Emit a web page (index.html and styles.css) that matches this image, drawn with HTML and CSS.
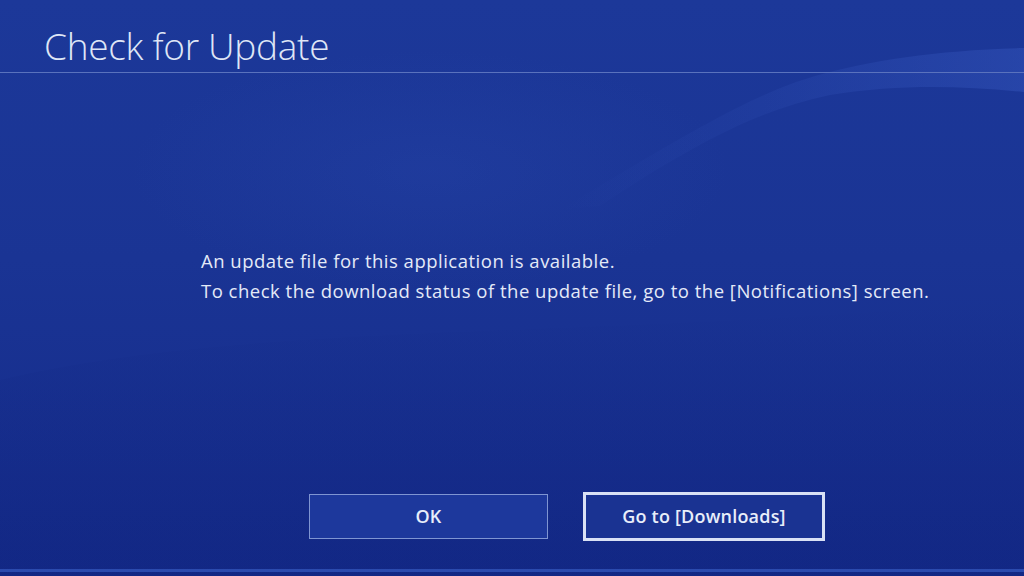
FILE: index.html
```html
<html lang="en">

<head>
    <meta charset="utf-8" />
    <title>Check for Update</title>
    <link rel="stylesheet" href="styles.css">
</head>

<body>
    <div class="screen">
        <svg class="waves" width="1024" height="576" viewBox="0 0 1024 576">
            <defs>
                <linearGradient id="band" x1="0" y1="0" x2="1" y2="0">
                    <stop offset="0" stop-color="#3a5cc4" stop-opacity="0" />
                    <stop offset="0.45" stop-color="#3a5cc4" stop-opacity="0.14" />
                    <stop offset="1" stop-color="#3a5cc4" stop-opacity="0.38" />
                </linearGradient>
                <linearGradient id="shade" x1="0" y1="0" x2="0" y2="1">
                    <stop offset="0" stop-color="#0c1f78" stop-opacity="0" />
                    <stop offset="1" stop-color="#0c1f78" stop-opacity="0.3" />
                </linearGradient>
                <radialGradient id="glow" cx="0.5" cy="0.5" r="0.5">
                    <stop offset="0" stop-color="#2b4bb0" stop-opacity="0.25" />
                    <stop offset="1" stop-color="#2b4bb0" stop-opacity="0" />
                </radialGradient>
            </defs>
            <ellipse cx="430" cy="170" rx="300" ry="120" fill="url(#glow)" />
            <path d="M1024 48 C 940 50, 870 60, 815 76 C 760 92, 700 125, 560 210 L 600 206 C 700 140, 760 110, 830 95 C 900 84, 960 86, 1024 92 Z" fill="url(#band)" />
            <path d="M0 380 C 250 320, 600 340, 1024 300 L 1024 576 L 0 576 Z" fill="url(#shade)" />
        </svg>

        <div class="header">
            <h1 class="title">Check for Update</h1>
        </div>

        <div class="message">
            <p>An update file for this application is available.</p>
            <p>To check the download status of the update file, go to the [Notifications] screen.</p>
        </div>

        <div class="actions">
            <button class="btn">OK</button>
            <button class="btn focused">Go to [Downloads]</button>
        </div>
    </div>
</body>

</html>
```

FILE: styles.css
```css
body {
    margin: 0;
    background-color: #172f8f;
}

.screen {
    position: relative;
    width: 1024px;
    height: 576px;
    box-sizing: border-box;
    padding-bottom: 4px;
    display: flex;
    flex-direction: column;
    overflow: hidden;
    background: linear-gradient(180deg, #1c3899 0%, #1a3494 45%, #152b8a 100%);
    font-family: "Open Sans", "Noto Sans", sans-serif;
    color: #e6ecf8;
}

.waves {
    position: absolute;
    left: 0;
    top: 0;
}

.header {
    position: relative;
    height: 73px;
    box-sizing: border-box;
    padding: 21px 0 0 44px;
    border-bottom: 1px solid #5a72bd;
}

.title {
    margin: 0;
    font-size: 37px;
    font-weight: 300;
    letter-spacing: -0.3px;
    line-height: 50px;
    color: #dfe6f6;
}

.message {
    position: relative;
    flex: 1;
    padding: 173px 0 0 201px;
}

.message p {
    margin: 0;
    font-size: 18.5px;
    letter-spacing: 0.5px;
    line-height: 30px;
    color: #e4eaf8;
}

.actions {
    position: relative;
    display: flex;
    align-items: center;
    gap: 35px;
    padding: 0 0 28px 309px;
    border-bottom: 3px solid #2b4aae;
}

.btn {
    width: 239px;
    height: 45px;
    box-sizing: border-box;
    padding-bottom: 3px;
    border: 1px solid #7f95d2;
    background-color: #1d389c;
    color: #e8eefa;
    font-family: "Open Sans", "Noto Sans", sans-serif;
    font-size: 18px;
    font-weight: 600;
    letter-spacing: 0.2px;
}

.focused {
    width: 242px;
    height: 49px;
    border: 3px solid #d9e1f5;
    background-color: #1a3392;
}
```
